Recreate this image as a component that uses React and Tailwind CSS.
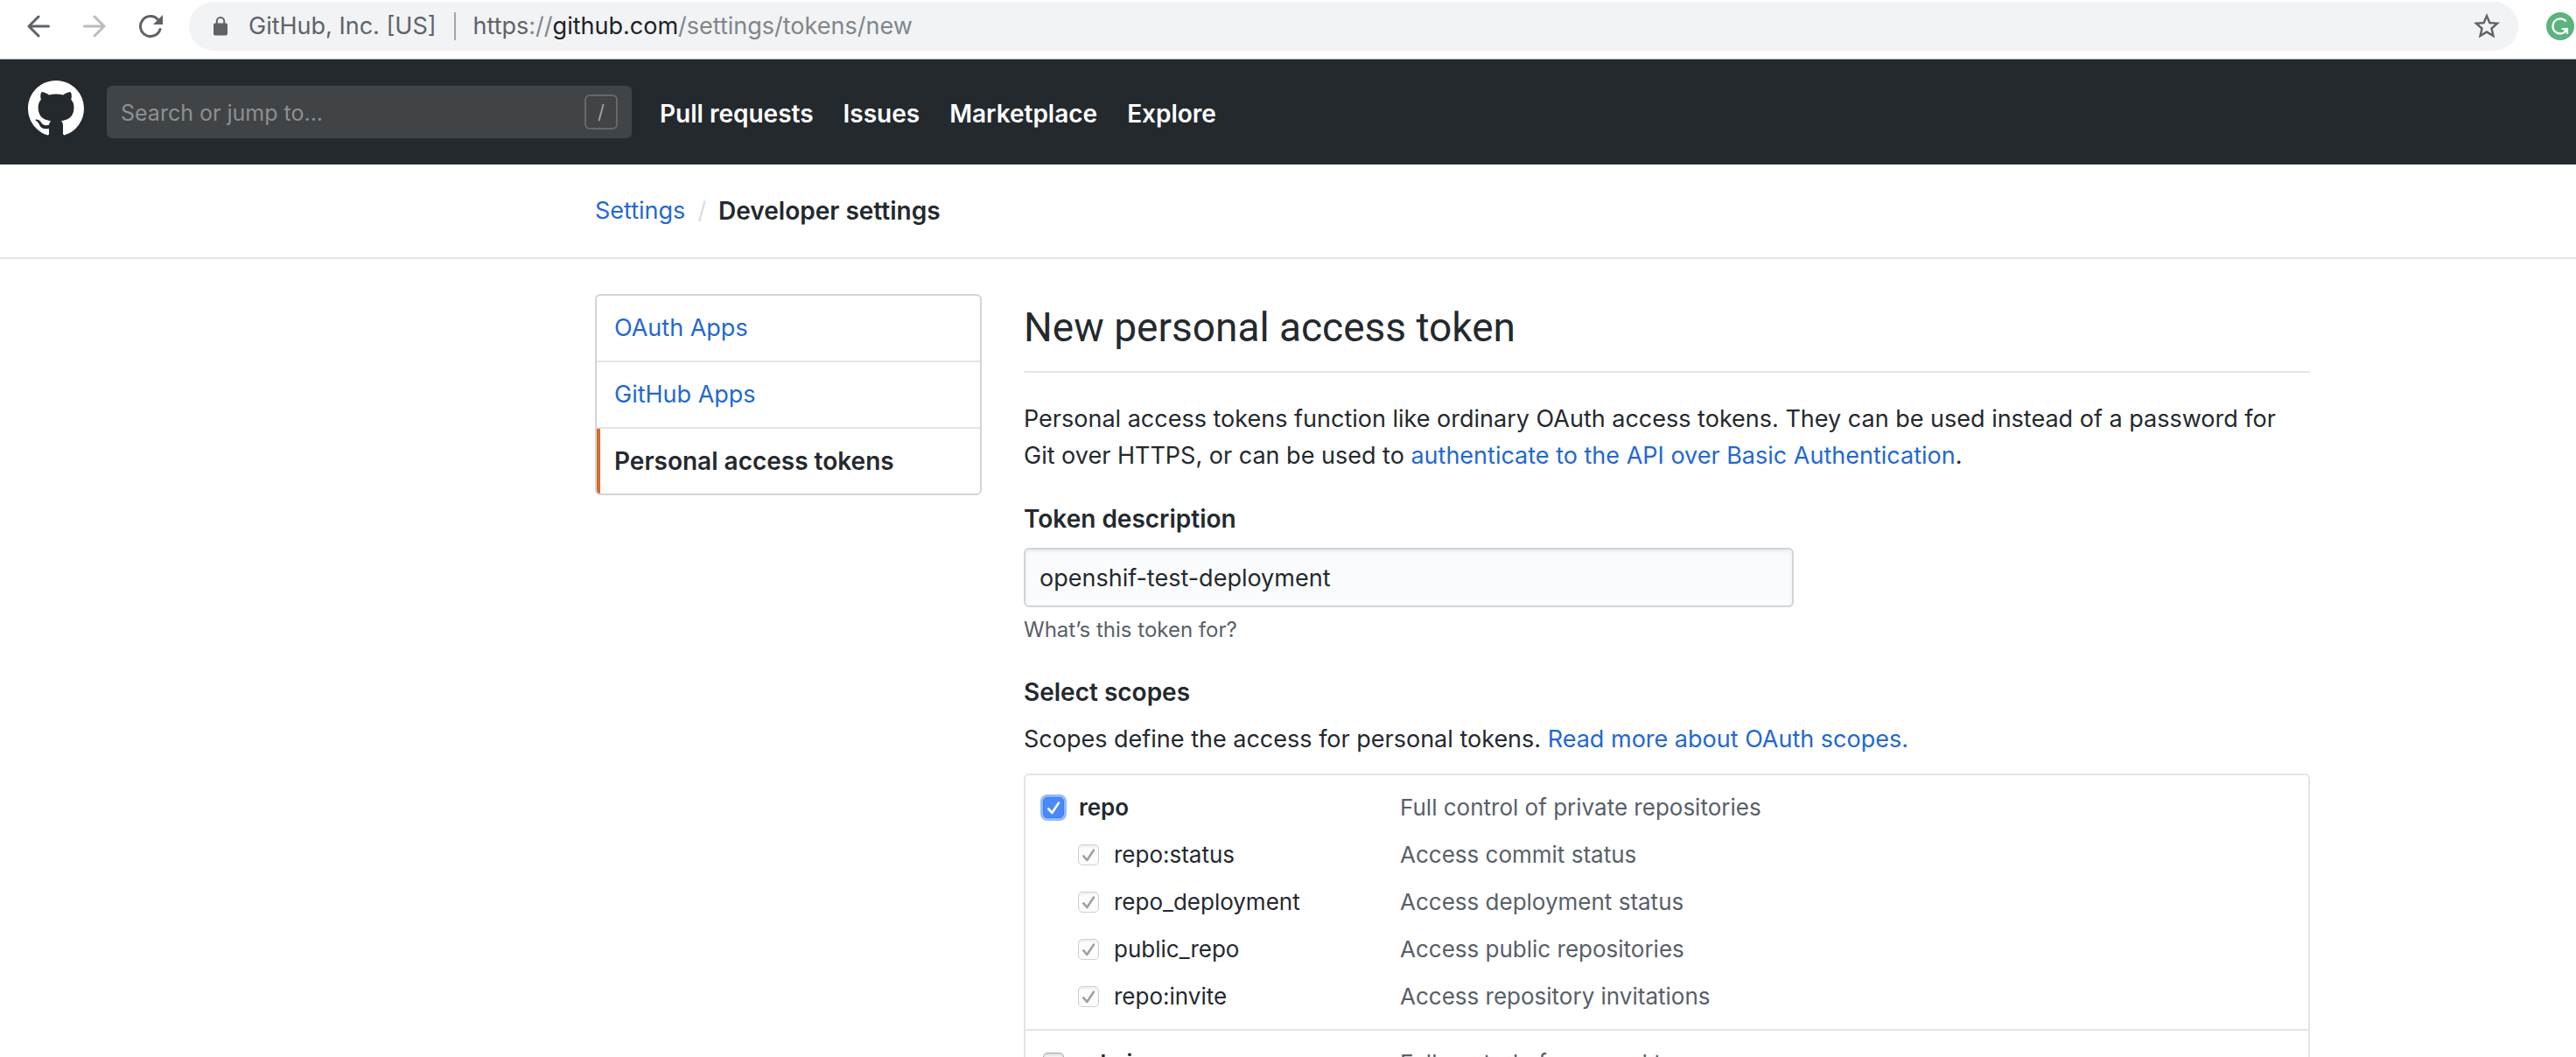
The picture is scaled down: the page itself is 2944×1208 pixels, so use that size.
const scopeGroups = [
  {
    name: "repo",
    description: "Full control of private repositories",
    checked: true,
    children: [
      { name: "repo:status", description: "Access commit status" },
      { name: "repo_deployment", description: "Access deployment status" },
      { name: "public_repo", description: "Access public repositories" },
      { name: "repo:invite", description: "Access repository invitations" },
    ],
  },
  {
    name: "admin:org",
    description: "Full control of orgs and teams",
    checked: false,
    children: [],
  },
];

function BackIcon({ className }) {
  return (
    <svg viewBox="0 0 26 26" className={className} fill="none" stroke="currentColor" strokeWidth="3" strokeLinecap="round" strokeLinejoin="round" aria-hidden="true">
      <path d="M24.5 13H2.5M13 2 2 13l11 11" />
    </svg>
  );
}

function ReloadIcon() {
  return (
    <svg viewBox="0 0 28 28" className="size-7" aria-hidden="true">
      <path d="M25 17.5A11.5 11.5 0 1 1 22.6 6.4" fill="none" stroke="currentColor" strokeWidth="3" strokeLinecap="round" />
      <path d="M28 1v11H17z" fill="currentColor" />
    </svg>
  );
}

function LockIcon() {
  return (
    <svg viewBox="0 0 16 22" className="h-[22px] w-4 shrink-0" aria-hidden="true">
      <rect y="7.5" width="16" height="14" rx="2" fill="currentColor" />
      <path d="M3.8 9V5.2a4.2 4.2 0 0 1 8.4 0V9" fill="none" stroke="currentColor" strokeWidth="2" />
    </svg>
  );
}

function StarIcon() {
  return (
    <svg viewBox="0 0 24 24" className="size-9" fill="currentColor" aria-hidden="true">
      <path d="M22 9.24l-7.19-.62L12 2 9.19 8.63 2 9.24l5.46 4.73L5.82 21 12 17.27 18.18 21l-1.63-7.03L22 9.24zM12 15.4l-3.76 2.27 1-4.28-3.32-2.88 4.38-.38L12 6.1l1.71 4.04 4.38.38-3.32 2.88 1 4.28L12 15.4z" />
    </svg>
  );
}

function GrammarlyIcon() {
  return (
    <svg viewBox="0 0 32 32" className="size-8" aria-hidden="true">
      <circle cx="16" cy="16" r="16" fill="#5bb37d" />
      <path d="M22.6 10.6A8.5 8.5 0 1 0 23.4 20" fill="none" stroke="#fff" strokeWidth="2.2" />
      <path d="M17.6 19H24v6" fill="none" stroke="#fff" strokeWidth="2.2" />
      <path d="M24 18.5 20.5 22" fill="none" stroke="#fff" strokeWidth="2" />
    </svg>
  );
}

function GitHubMark() {
  return (
    <svg viewBox="0 0 16 16" className="size-16" fill="currentColor" aria-hidden="true">
      <path d="M8 0C3.58 0 0 3.58 0 8c0 3.54 2.29 6.53 5.47 7.59.4.07.55-.17.55-.38 0-.19-.01-.82-.01-1.49-2.01.37-2.53-.49-2.69-.94-.09-.23-.48-.94-.82-1.13-.28-.15-.68-.52-.01-.53.63-.01 1.08.58 1.23.82.72 1.21 1.87.87 2.33.66.07-.52.28-.87.51-1.07-1.78-.2-3.64-.89-3.64-3.95 0-.87.31-1.59.82-2.15-.08-.2-.36-1.02.08-2.12 0 0 .67-.21 2.2.82.64-.18 1.32-.27 2-.27s1.36.09 2 .27c1.53-1.04 2.2-.82 2.2-.82.44 1.1.16 1.92.08 2.12.51.56.82 1.27.82 2.15 0 3.07-1.87 3.75-3.65 3.95.29.25.54.73.54 1.48 0 1.07-.01 1.93-.01 2.2 0 .21.15.46.55.38A8.01 8.01 0 0 0 16 8c0-4.42-3.58-8-8-8z" />
    </svg>
  );
}

function BrowserBar() {
  return (
    <div className="flex items-center border-b border-[#b6b9bb] bg-white pt-[2px] pr-[2px] pb-[9px] pl-6 text-[#5f6368]">
      <div className="flex items-center gap-6">
        <button type="button" aria-label="Back" className="grid size-10 place-items-center">
          <BackIcon className="size-[26px]" />
        </button>
        <button type="button" aria-label="Forward" className="grid size-10 place-items-center text-[#babcbe]">
          <BackIcon className="size-[26px] rotate-180" />
        </button>
        <button type="button" aria-label="Reload" className="grid size-10 place-items-center">
          <ReloadIcon />
        </button>
      </div>
      <div className="ml-6 flex h-14 min-w-0 flex-1 items-center rounded-full bg-[#f1f3f4] pr-[18px] pl-7 text-[27px]">
        <LockIcon />
        <span className="ml-6 whitespace-nowrap">GitHub, Inc. [US]</span>
        <span className="mx-5 h-8 w-[2px] bg-[#a5a8ab]" />
        <span className="flex-1 truncate text-[#80868b]">
          <span className="text-[#5f6368]">https</span>://<span className="text-[#202124]">github.com</span>/settings/tokens/new
        </span>
        <button type="button" aria-label="Bookmark this page">
          <StarIcon />
        </button>
      </div>
      <button type="button" aria-label="Grammarly" className="ml-8">
        <GrammarlyIcon />
      </button>
    </div>
  );
}

function SiteHeader() {
  return (
    <header className="flex h-[120px] shrink-0 items-center bg-[#24292e] px-8 text-white">
      <a href="#home" aria-label="GitHub home" className="mb-2">
        <GitHubMark />
      </a>
      <div className="ml-[26px] flex h-[60px] w-[600px] items-center rounded-md bg-[#404447] px-4">
        <input
          type="text"
          aria-label="Search or jump to"
          placeholder="Search or jump to..."
          className="h-full min-w-0 flex-1 bg-transparent pt-[2px] text-[25px] outline-none placeholder:text-[#8d9092]"
        />
        <kbd className="grid h-10 w-[38px] place-items-center rounded-md border-2 border-[#66696c] font-[Inter] text-[22px] leading-none text-[#a0a3a5]">
          /
        </kbd>
      </div>
      <nav className="mt-1 ml-8 flex gap-[34px] text-[28px] font-semibold">
        <a href="#pulls">Pull requests</a>
        <a href="#issues">Issues</a>
        <a href="#marketplace">Marketplace</a>
        <a href="#explore">Explore</a>
      </nav>
    </header>
  );
}

function SideMenu() {
  return (
    <nav className="w-[442px] shrink-0 self-start overflow-hidden rounded-md border-2 border-[#d1d5da] text-[27px] leading-[42px]">
      <a href="#oauth-apps" className="block border-b-2 border-[#e1e4e8] px-5 py-4 text-[#2468d0]">
        OAuth Apps
      </a>
      <a href="#github-apps" className="block border-b-2 border-[#e1e4e8] px-5 py-4 text-[#2468d0]">
        GitHub Apps
      </a>
      <a href="#tokens" aria-current="page" className="block border-l-4 border-[#d66c2c] py-4 pr-5 pl-4 text-[28px] font-semibold">
        Personal access tokens
      </a>
    </nav>
  );
}

function Checkbox({ id, checked = false, disabled = false, focused = false }) {
  const look = focused
    ? "border-[#3b7cf0] bg-[#4a8af8] ring-3 ring-[#93b8fb] text-white"
    : disabled
      ? "border-[#d0d0d0] bg-[#fcfcfc] shadow-[inset_0_2px_2px_rgba(0,0,0,0.06)]"
      : "border-[#a3a3a3] bg-white shadow-[inset_0_3px_3px_rgba(0,0,0,0.12)]";
  return (
    <span className="grid size-6 shrink-0">
      <input
        id={id}
        type="checkbox"
        defaultChecked={checked}
        disabled={disabled}
        className={`col-start-1 row-start-1 size-6 appearance-none rounded-[5px] border ${look}`}
      />
      {checked && (
        <svg
          viewBox="0 0 24 24"
          className={`pointer-events-none col-start-1 row-start-1 size-6 ${focused ? "text-white" : "text-[#a0a0a0]"}`}
          fill="none"
          stroke="currentColor"
          strokeWidth="2.6"
          strokeLinecap="round"
          strokeLinejoin="round"
          aria-hidden="true"
        >
          <path d="M6.3 13.3 10.3 18 18 6.5" />
        </svg>
      )}
    </span>
  );
}

function ScopeRow({ scope, parent = false }) {
  return (
    <div className="flex h-[54px] items-center text-[26px]">
      <div className={`flex w-[408px] shrink-0 items-center ${parent ? "gap-4" : "gap-4 pl-10"}`}>
        <Checkbox id={scope.name} checked={scope.checked ?? !parent} disabled={!parent} focused={parent && scope.checked} />
        <label htmlFor={scope.name} className={parent ? "pl-px font-semibold" : "pl-px"}>
          {scope.name}
        </label>
      </div>
      <span className="text-[#586069]">{scope.description}</span>
    </div>
  );
}

export default function App() {
  return (
    <div className="flex h-screen flex-col overflow-hidden bg-white font-[Inter,sans-serif] text-[27px] leading-[42px] text-[#24292e]">
      <BrowserBar />
      <SiteHeader />
      <div className="shrink-0 border-b-2 border-[#e1e4e8] py-8">
        <div className="ml-[680px] flex max-w-[1960px] gap-[14px]">
          <a href="#settings" className="text-[#2468d0]">
            Settings
          </a>
          <span className="text-[#d8dde2]">/</span>
          <span className="text-[28px] font-semibold">Developer settings</span>
        </div>
      </div>
      <div className="mt-10 ml-[680px] flex max-w-[1960px] gap-12">
        <SideMenu />
        <main className="min-w-0 flex-1">
          <h1 className="border-b-2 border-[#e1e4e8] pb-3 font-[Roboto] text-[46px] leading-[76px]">New personal access token</h1>
          <p className="mt-8">
            Personal access tokens function like ordinary OAuth access tokens. They can be used instead of a password for Git
            over HTTPS, or can be used to{" "}
            <a href="#basic-auth" className="text-[#2468d0]">
              authenticate to the API over Basic Authentication
            </a>
            .
          </p>
          <label htmlFor="description" className="mt-[30px] block text-[28px] font-semibold">
            Token description
          </label>
          <input
            id="description"
            type="text"
            defaultValue="openshif-test-deployment"
            className="mt-3 block h-[68px] w-[880px] max-w-full rounded-md border-2 border-[#d1d5da] bg-[#fafbfc] px-4 shadow-[inset_0_2px_4px_rgba(27,31,35,0.075)] outline-none"
          />
          <p className="mt-2 text-[24px] leading-[36px] text-[#586069]">What’s this token for?</p>
          <h2 className="mt-8 text-[28px] font-semibold">Select scopes</h2>
          <p className="mt-3">
            Scopes define the access for personal tokens.{" "}
            <a href="#scopes" className="text-[#2468d0]">
              Read more about OAuth scopes.
            </a>
          </p>
          <div className="mt-[18px] rounded-md border-2 border-[#e1e4e8]">
            {scopeGroups.map((group) => (
              <div key={group.name} className="border-b-2 border-[#e1e4e8] px-5 py-[10px]">
                <ScopeRow scope={group} parent />
                {group.children.map((child) => (
                  <ScopeRow key={child.name} scope={child} />
                ))}
              </div>
            ))}
          </div>
        </main>
      </div>
    </div>
  );
}
